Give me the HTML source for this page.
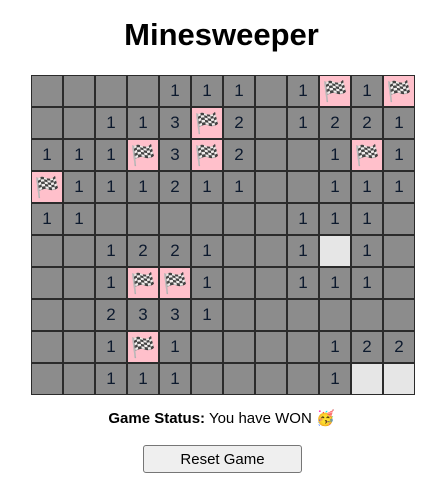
<!DOCTYPE html><html><head><style>
body{margin:0;width:443px;height:495px;background:#fff;font-family:"Liberation Sans",sans-serif;position:relative}
h1{position:absolute;top:17px;left:0;width:443px;text-align:center;margin:0;font-size:31px;font-weight:bold;color:#000}
.g{position:absolute;left:31px;top:75px;display:grid;grid-template-columns:repeat(12,32px);grid-auto-rows:32px}
.c{box-sizing:border-box;border:1px solid #2b2b2b;background:#8c8c8c;display:flex;align-items:center;justify-content:center;font-size:17px;color:#0d1a2e}
.f{background:#ffc0cb;font-size:20px}
.w{background:#e6e6e6}
.s{position:absolute;top:409px;left:0;width:443px;text-align:center;font-size:15px}
.b{position:absolute;left:143px;top:445px;width:159px;height:28px;box-sizing:border-box;border:1px solid #767676;border-radius:3px;background:#efefef;font-size:15px;display:flex;align-items:center;justify-content:center}
</style></head><body>
<h1>Minesweeper</h1>
<div class="g" id="g"></div>
<div class="s"><b>Game Status:</b> You have WON 🥳</div>
<div class="b">Reset Game</div>
<script>
var r=["____111_1F1F","__113F2_1221","111F3F2__1F1","F111211__111","11______111_","__1221__1W1_","__1FF1__111_","__2331______","__1F1____122","__111____1WW"];
var h="";r.forEach(function(s){for(var i=0;i<12;i++){var ch=s[i];if(ch=="_")h+='<div class="c"></div>';else if(ch=="F")h+='<div class="c f">🏁</div>';else if(ch=="W")h+='<div class="c w"></div>';else h+='<div class="c">'+ch+'</div>';}});
document.getElementById("g").innerHTML=h;
</script>
</body></html>
